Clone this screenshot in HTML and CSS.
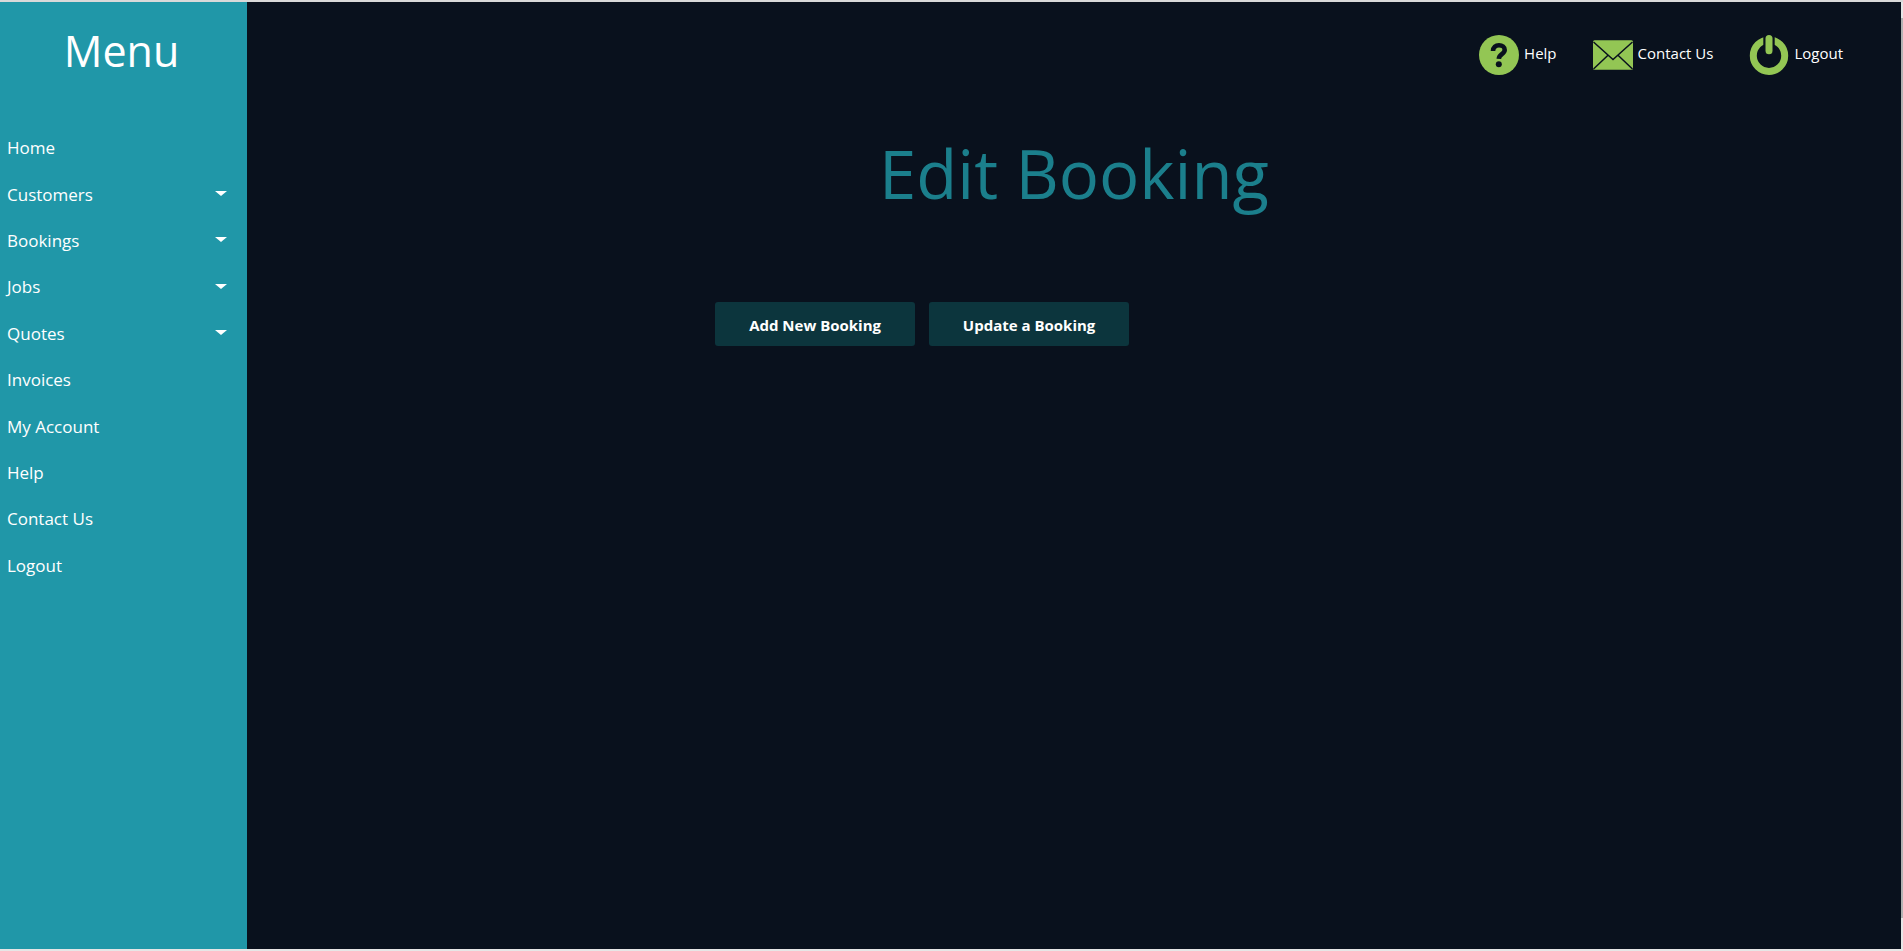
FILE: index.html
```html
<!DOCTYPE html>
<html lang="en">
<head>
<meta charset="utf-8">
<title>Edit Booking</title>
<meta name="viewport" content="width=device-width, initial-scale=1">
<link rel="stylesheet" href="styles.css">
</head>
<body>
<div class="app">
  <aside class="sidebar">
    <h2 class="sidebar-title">Menu</h2>
    <nav class="side-nav" aria-label="Main menu">
      <a class="side-link" href="#">Home</a>
      <a class="side-link has-menu" href="#">Customers</a>
      <a class="side-link has-menu" href="#">Bookings</a>
      <a class="side-link has-menu" href="#">Jobs</a>
      <a class="side-link has-menu" href="#">Quotes</a>
      <a class="side-link" href="#">Invoices</a>
      <a class="side-link" href="#">My Account</a>
      <a class="side-link" href="#">Help</a>
      <a class="side-link" href="#">Contact Us</a>
      <a class="side-link" href="#">Logout</a>
    </nav>
  </aside>
  <main class="content">
    <nav class="top-nav" aria-label="Account">
      <a class="top-link" href="#">
        <svg class="top-icon" viewBox="0 0 40 40" aria-hidden="true">
          <circle class="icon-fill" cx="20" cy="20" r="20"/>
          <path class="icon-cut" stroke-width="4.600" d="M14 16c0.200-3.700 2.600-5.700 6-5.700 3.300 0 5.700 1.900 5.700 4.700 0 4.200-5.700 4.200-5.900 8.800"/>
          <circle class="icon-hole" cx="19.800" cy="29.300" r="3"/>
        </svg>
        <span>Help</span>
      </a>
      <a class="top-link" href="#">
        <svg class="top-icon" viewBox="0 0 40 40" aria-hidden="true">
          <rect class="icon-fill" x="0" y="5.300" width="40" height="29.400" rx="1.500"/>
          <path class="icon-cut" stroke-width="1.500" d="M0.500 7 L20 24.500 L39.500 7 M0.500 34 L15 20.200 M39.500 34 L25 20.200"/>
        </svg>
        <span>Contact Us</span>
      </a>
      <a class="top-link" href="#">
        <svg class="top-icon" viewBox="0 0 40 40" aria-hidden="true">
          <circle class="icon-ring" cx="20" cy="20.700" r="15.700"/>
          <rect class="icon-hole" x="14.300" y="0" width="11.400" height="18"/>
          <path class="icon-bar" d="M20 3.500 V15.800"/>
        </svg>
        <span>Logout</span>
      </a>
    </nav>
    <h1 class="page-title">Edit Booking</h1>
    <div class="actions">
      <button class="action" type="button">Add New Booking</button>
      <button class="action" type="button">Update a Booking</button>
    </div>
  </main>
  <div class="scroll-track"><div class="scroll-thumb"></div></div>
</div>
</body>
</html>
```
FILE: styles.css
```css
* {
  box-sizing: border-box;
}

body {
  margin: 0;
  background: #e6e6e6;
  color: #fff;
  font-family: "Segoe UI", "Open Sans", "Noto Sans", sans-serif;
}

a {
  color: inherit;
  text-decoration: none;
}

.app {
  display: flex;
  min-height: 100vh;
  border-top: 2px solid #d9d9d9;
  border-bottom: 2px solid #e6e6e6;
}

.sidebar {
  flex: 0 0 247px;
  background: #2097a8;
}

.sidebar-title {
  margin: 0;
  padding: 19px 4px 44px 0;
  font-size: 43px;
  font-weight: 400;
  line-height: 60px;
  text-align: center;
}

.side-nav {
  display: grid;
  grid-auto-rows: 1fr;
  min-height: 464px;
}

.side-link {
  display: flex;
  align-items: center;
  justify-content: space-between;
  padding: 0 20px 0 7px;
  font-size: 17px;
  line-height: 24px;
}

.has-menu::after {
  content: "";
  margin-bottom: 2px;
  border: 5px solid transparent;
  border-width: 5px 6px 0;
  border-top-color: #fff;
}

.content {
  flex: 1;
  background: #09111d;
}

.top-nav {
  display: flex;
  justify-content: flex-end;
  gap: 36px;
  padding: 33px 58px 0 0;
}

.top-link {
  display: flex;
  align-items: center;
  gap: 5px;
  font-size: 15px;
  line-height: 20px;
}

.top-link span {
  padding-bottom: 4px;
}

.top-icon {
  width: 40px;
  height: 40px;
}

.icon-fill {
  fill: #93c654;
}

.icon-hole {
  fill: #09111d;
}

.icon-cut {
  fill: none;
  stroke: #09111d;
}

.icon-ring {
  fill: none;
  stroke: #93c654;
  stroke-width: 7;
}

.icon-bar {
  fill: none;
  stroke: #93c654;
  stroke-width: 7;
  stroke-linecap: round;
}

.page-title {
  margin: 50px 0 0;
  color: #1b7f8c;
  font-size: 67px;
  font-weight: 400;
  line-height: 96px;
  text-align: center;
}

.actions {
  display: flex;
  gap: 14px;
  padding: 81px 0 0 28.3%;
}

.action {
  width: 200px;
  padding: 12px 8px 10px;
  border: 0;
  border-radius: 3px;
  background: #0c353d;
  color: #fff;
  font: inherit;
  font-size: 15px;
  font-weight: 700;
  line-height: 22px;
}

.scroll-track {
  flex: 0 0 2px;
  padding: 16px 0 31px;
  display: flex;
  background: #e6e6e6;
}

.scroll-thumb {
  flex: 1;
  background: #b4b4b4;
}
```
